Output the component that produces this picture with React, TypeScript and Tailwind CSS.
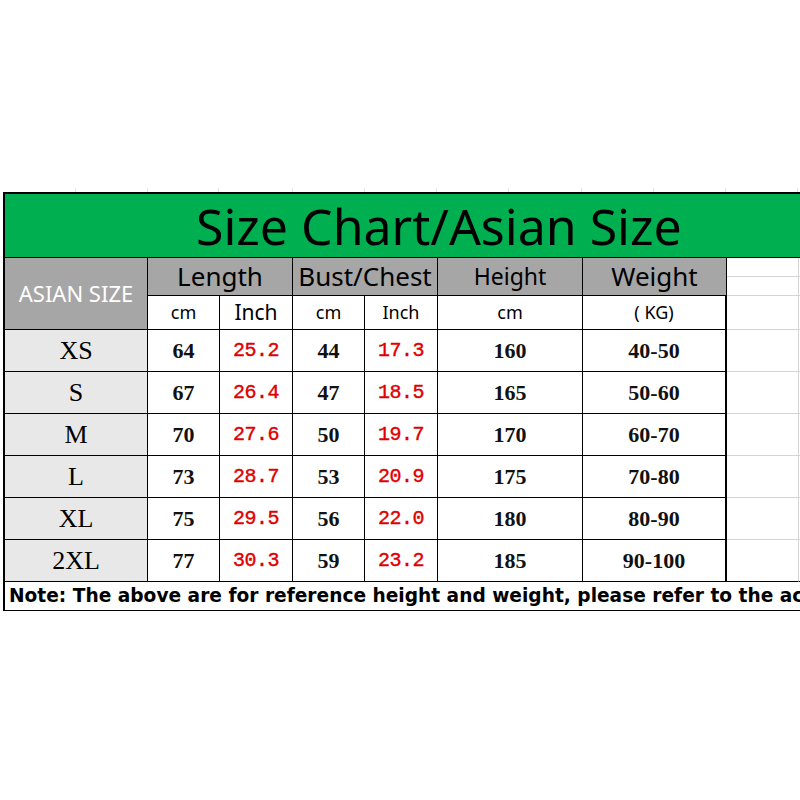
import React from 'react';

const rows = [
  { size: 'XS', len: '64', lenIn: '25.2', bust: '44', bustIn: '17.3', height: '160', weight: '40-50' },
  { size: 'S', len: '67', lenIn: '26.4', bust: '47', bustIn: '18.5', height: '165', weight: '50-60' },
  { size: 'M', len: '70', lenIn: '27.6', bust: '50', bustIn: '19.7', height: '170', weight: '60-70' },
  { size: 'L', len: '73', lenIn: '28.7', bust: '53', bustIn: '20.9', height: '175', weight: '70-80' },
  { size: 'XL', len: '75', lenIn: '29.5', bust: '56', bustIn: '22.0', height: '180', weight: '80-90' },
  { size: '2XL', len: '77', lenIn: '30.3', bust: '59', bustIn: '23.2', height: '185', weight: '90-100' },
];

const ticks = [72, 72, 71, 74, 72, 72, 72, 73, 72, 72, 72];

const sans = "font-['Noto_Sans',sans-serif]";
const cell = 'flex items-center justify-center border-r border-b border-black';
const num = "font-['Liberation_Serif',serif] font-bold text-[22px] text-[#111]";
const red = "font-['Liberation_Mono',monospace] text-[20px] tracking-[-0.5px] text-[#e00000] [-webkit-text-stroke:0.4px_#e00000]";

export default function App() {
  return (
    <div className="w-[800px] h-[800px] bg-white overflow-hidden">
      <div className="pt-[188px]">
        <div className="flex h-[4px] ml-[4px]">
          {ticks.map((w, i) => (
            <div key={i} style={{ width: w }} className="shrink-0 border-r border-[#e2e2e2]" />
          ))}
        </div>

        <div className="ml-[3px] w-[880px] border-t-2 border-l-2 border-black grid grid-cols-[143px_72px_73px_72px_73px_145px_144px_72px_86px]">
          {/* title */}
          <div className={`col-span-9 h-[64px] bg-[#00b050] border-b border-black flex items-center pl-[191px] ${sans} text-[50px] leading-none text-black`}>
            Size Chart/Asian Size
          </div>

          {/* header row 1 */}
          <div className={`${cell} row-span-2 h-[72px] bg-[#a6a6a6] ${sans} text-[22px] text-white`}>ASIAN SIZE</div>
          <div className={`${cell} col-span-2 h-[38px] bg-[#a6a6a6] ${sans} text-[26px] text-black`}>Length</div>
          <div className={`${cell} col-span-2 h-[38px] bg-[#a6a6a6] ${sans} text-[26px] text-black`}>Bust/Chest</div>
          <div className={`${cell} h-[38px] bg-[#a6a6a6] ${sans} text-[23px] text-black`}>Height</div>
          <div className={`${cell} h-[38px] bg-[#a6a6a6] ${sans} text-[26px] text-black`}>Weight</div>
          <div className="h-[38px] flex flex-col border-r border-b border-[#d4d4d4]">
            <div className="h-[19px] border-b border-[#d4d4d4]" />
          </div>
          <div className="h-[38px] flex flex-col border-b border-[#d4d4d4]">
            <div className="h-[19px] border-b border-[#d4d4d4]" />
          </div>

          {/* header row 2 */}
          <div className={`${cell} h-[34px] ${sans} text-[18px] text-black`}>cm</div>
          <div className={`${cell} h-[34px] ${sans} text-[21px] text-black`}>Inch</div>
          <div className={`${cell} h-[34px] ${sans} text-[18px] text-black`}>cm</div>
          <div className={`${cell} h-[34px] ${sans} text-[18px] text-black`}>Inch</div>
          <div className={`${cell} h-[34px] ${sans} text-[18px] text-black`}>cm</div>
          <div className={`${cell} h-[34px] border-r-2 ${sans} text-[18px] text-black`}>( KG)</div>
          <div className="h-[34px] border-r border-b border-[#d4d4d4]" />
          <div className="h-[34px] border-b border-[#d4d4d4]" />

          {/* data */}
          {rows.map((r, i) => {
            const last = i === rows.length - 1;
            const edge = last ? 'border-black' : 'border-[#d4d4d4]';
            return (
              <React.Fragment key={r.size}>
                <div className={`${cell} h-[42px] bg-[#e8e8e8] font-['Liberation_Serif',serif] text-[26px] text-black`}>{r.size}</div>
                <div className={`${cell} h-[42px] ${num}`}>{r.len}</div>
                <div className={`${cell} h-[42px] ${red}`}>{r.lenIn}</div>
                <div className={`${cell} h-[42px] ${num}`}>{r.bust}</div>
                <div className={`${cell} h-[42px] ${red}`}>{r.bustIn}</div>
                <div className={`${cell} h-[42px] ${num}`}>{r.height}</div>
                <div className={`${cell} h-[42px] border-r-2 ${num}`}>{r.weight}</div>
                <div className={`h-[42px] border-b ${edge} border-r border-r-[#d4d4d4]`} />
                <div className={`h-[42px] border-b ${edge}`} />
              </React.Fragment>
            );
          })}

          {/* note */}
          <div className="col-span-9 h-[29px] border-b border-black flex items-center pl-[4px] whitespace-nowrap font-['DejaVu_Sans',sans-serif] font-bold text-[18.6px] text-black">
            Note: The above are for reference height and weight, please refer to the actual product.
          </div>
        </div>
      </div>
    </div>
  );
}
